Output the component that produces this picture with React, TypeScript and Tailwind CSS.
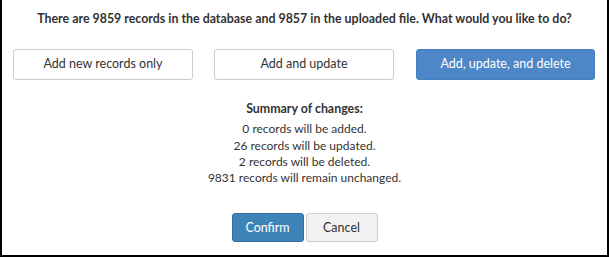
import React from "react";

const summary = [
  "0 records will be added.",
  "26 records will be updated.",
  "2 records will be deleted.",
  "9831 records will remain unchanged.",
];

export default function App() {
  return (
    <div
      className="w-[609px] h-[257px] bg-white border-x-2 border-b-2 border-black text-[#333] text-[12px]"
      style={{ fontFamily: "Lato, 'Liberation Sans', sans-serif" }}
    >
      <p className="pt-[11px] text-center font-bold text-[12.4px] leading-[16px]">
        There are 9859 records in the database and 9857 in the uploaded file. What would you like to do?
      </p>

      {/* Options */}
      <div className="flex gap-[21px] pl-[11px] mt-[22px] text-[12.5px]">
        <button className="w-[180px] h-[31px] rounded-[3px] border border-[#ccc] bg-white">
          Add new records only
        </button>
        <button className="w-[180px] h-[31px] rounded-[3px] border border-[#ccc] bg-white">
          Add and update
        </button>
        <button className="w-[179px] h-[31px] rounded-[3px] border border-[#4680c0] bg-[#4d87c7] text-white ml-px">
          Add, update, and delete
        </button>
      </div>

      <div className="mt-[21px] text-center leading-[16.3px]">
        <p className="font-bold text-[12.4px]">Summary of changes:</p>
        <div className="mt-[4px]">
          {summary.map((s) => (
            <p key={s}>{s}</p>
          ))}
        </div>
      </div>

      <div className="flex justify-center gap-[2px] mt-[27px] text-[12.5px]">
        <button className="w-[72px] h-[29px] rounded-[3px] border border-[#2e6da4] bg-[#3e84b9] text-white">
          Confirm
        </button>
        <button className="w-[72px] h-[29px] rounded-[3px] border border-[#ccc] bg-[#f2f2f2]">
          Cancel
        </button>
      </div>
    </div>
  );
}
